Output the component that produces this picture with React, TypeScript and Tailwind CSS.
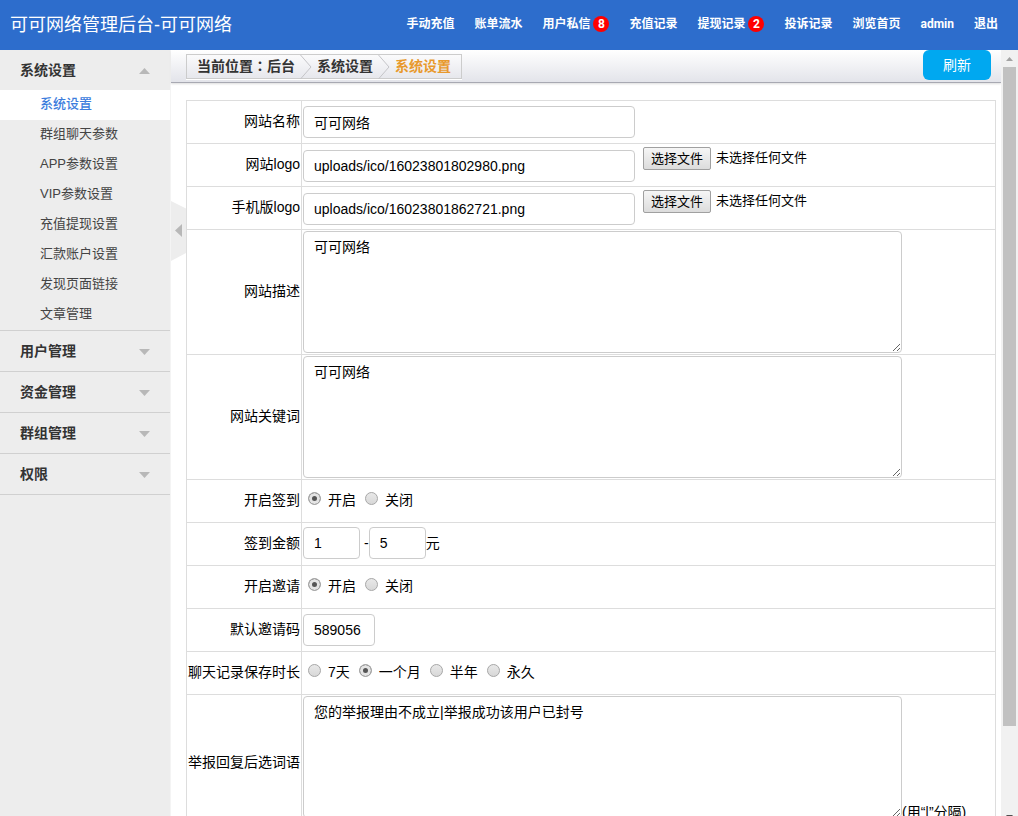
import { useState } from 'react';
import type { ReactNode } from 'react';
import clsx from 'clsx';

const navs = [
  { title: '手动充值' },
  { title: '账单流水' },
  { title: '用户私信', count: 8 },
  { title: '充值记录' },
  { title: '提现记录', count: 2 },
  { title: '投诉记录' },
  { title: '浏览首页' },
  { title: 'admin' },
  { title: '退出' },
];

const menus = [
  {
    title: '系统设置',
    items: [
      '系统设置',
      '群组聊天参数',
      'APP参数设置',
      'VIP参数设置',
      '充值提现设置',
      '汇款账户设置',
      '发现页面链接',
      '文章管理',
    ],
  },
  { title: '用户管理', items: [] },
  { title: '资金管理', items: [] },
  { title: '群组管理', items: [] },
  { title: '权限', items: [] },
];

const inputClass =
  'h-8 rounded border border-[#ccc] bg-white px-2.5 text-sm text-black outline-none focus:border-[#2d6dcc]';

function Row({
  label,
  htmlFor,
  children,
}: {
  label: string;
  htmlFor?: string;
  children: ReactNode;
}) {
  return (
    <tr>
      <th
        scope="row"
        className="h-[43px] w-[115px] border border-[#ddd] px-px pt-px pb-[3px] text-right font-normal whitespace-nowrap"
      >
        <label htmlFor={htmlFor}>{label}</label>
      </th>
      <td className="h-[43px] border border-[#ddd] p-px">{children}</td>
    </tr>
  );
}

function FileRow({ label, id, value }: { label: string; id: string; value: string }) {
  const [fileName, setFileName] = useState('未选择任何文件');

  return (
    <Row label={label} htmlFor={id}>
      <div className="flex h-10 items-start gap-2">
        <input
          id={id}
          type="text"
          defaultValue={value}
          className={clsx(inputClass, 'mt-[5px] w-[332px]')}
        />
        <div className="relative mt-px flex items-center gap-[5px] text-[13px]">
          <input
            id={`${id}-file`}
            type="file"
            className="sr-only"
            onChange={(e) => setFileName(e.target.files?.[0]?.name ?? '未选择任何文件')}
          />
          <label
            htmlFor={`${id}-file`}
            className="h-[23px] rounded-xs border border-[#a0a0a0] bg-linear-to-b from-[#f6f6f6] to-[#dcdcdc] px-[7px] leading-[22px]"
          >
            选择文件
          </label>
          <span className="leading-6">{fileName}</span>
        </div>
      </div>
    </Row>
  );
}

function RadioRow({
  label,
  name,
  options,
  checked,
}: {
  label: string;
  name: string;
  options: string[];
  checked: string;
}) {
  return (
    <Row label={label}>
      <div role="radiogroup" aria-label={label} className="flex gap-[9px] pb-0.5 pl-[5px]">
        {options.map((option) => (
          <label key={option} className="flex items-start gap-[7px]">
            <input
              type="radio"
              name={name}
              defaultChecked={option === checked}
              className="mt-0.5 size-[13px] appearance-none rounded-full border border-[#a8a8a8] bg-linear-to-b from-[#e8e8e8] to-[#d8d8d8] checked:bg-none checked:bg-[#555] checked:shadow-[inset_0_0_0_3px_#e4e4e4]"
            />
            {option}
          </label>
        ))}
      </div>
    </Row>
  );
}

function Chevron() {
  return (
    <svg width="12" height="24" viewBox="0 0 12 24" fill="none" stroke="#c4c4c8">
      <path d="M.5 0 11 12 .5 24" />
    </svg>
  );
}

function Sidebar() {
  const [open, setOpen] = useState('系统设置');
  const [active, setActive] = useState('系统设置');

  return (
    <aside className="w-[171px] shrink-0 overflow-hidden border-r border-[#f4f4f4] bg-[#ededed]">
      {menus.map((menu) => (
        <div key={menu.title} className="border-b border-[#d0d0d0]">
          <button
            type="button"
            onClick={() => setOpen(open === menu.title ? '' : menu.title)}
            className="flex h-10 w-full items-center justify-between px-5 font-bold text-[#333]"
          >
            {menu.title}
            <svg
              width="11"
              height="6"
              viewBox="0 0 11 6"
              fill="#b8b8b8"
              className={clsx('mt-0.5', open !== menu.title && 'rotate-180')}
            >
              <path d="M0 6 5.5 0 11 6z" />
            </svg>
          </button>
          {open === menu.title && menu.items.length > 0 && (
            <ul>
              {menu.items.map((item) => (
                <li key={item}>
                  <a
                    href="#"
                    onClick={() => setActive(item)}
                    className={clsx(
                      'block h-[30px] pl-10 text-[13px] leading-7',
                      active === item
                        ? 'bg-white font-medium text-[#3c7ddd]'
                        : 'text-[#444]'
                    )}
                  >
                    {item}
                  </a>
                </li>
              ))}
            </ul>
          )}
        </div>
      ))}
    </aside>
  );
}

// 右侧滚动条
function ScrollTrack() {
  return (
    <div aria-hidden="true" className="flex w-[17px] shrink-0 flex-col items-center bg-[#f1f1f1]">
      <div className="flex h-[17px] shrink-0 items-center">
        <svg width="7" height="4" viewBox="0 0 7 4" fill="#a3a3a3">
          <path d="M0 4 3.5 0 7 4z" />
        </svg>
      </div>
      <div className="h-[86%] w-[13px] bg-[#c1c1c1]" />
      <div className="flex-1" />
      <div className="-mb-4 flex h-[17px] shrink-0 items-start">
        <svg width="7" height="4" viewBox="0 0 7 4" fill="#505050">
          <path d="M0 0h7L3.500 4z" />
        </svg>
      </div>
    </div>
  );
}

export default function App() {
  return (
    <div className="flex h-screen flex-col overflow-hidden bg-white font-['Liberation_Sans','Noto_Sans_CJK_SC',sans-serif] text-sm text-black">
      <header className="flex h-[50px] shrink-0 items-center justify-between bg-[#2d6dcc] pr-5 pl-2.5 text-white">
        <h1 className="text-lg">可可网络管理后台-可可网络</h1>
        <nav className="flex items-center gap-5 pb-0.5 font-['Roboto','Noto_Sans_CJK_SC',sans-serif] text-xs font-bold">
          {navs.map((nav) => (
            <a key={nav.title} href="#" className="flex items-center gap-[3px]">
              {nav.title}
              {nav.count && (
                <span className="size-4 rounded-full bg-[#f00] text-center leading-4">
                  {nav.count}
                </span>
              )}
            </a>
          ))}
        </nav>
      </header>

      <div className="flex min-h-0 flex-1 overflow-hidden">
        <Sidebar />

        <div className="flex min-w-0 flex-1 flex-col">
          <div className="flex h-[33px] shrink-0 items-start justify-between border-b border-[#a8a9b2] bg-linear-to-b from-white to-[#e3e4ea] pr-2.5 pl-[15px] shadow-[0_1px_2px_#ddd]">
            <ol className="mt-1 flex h-[25px] items-center gap-[5px] border border-[#ccc] px-2.5 font-bold text-[#333] shadow-[0_1px_0_#fff]">
              <li className="pb-0.5">
                当前位置<span className="font-['Noto_Sans_CJK_TC',sans-serif]">：</span>后台
              </li>
              <li aria-hidden="true">
                <Chevron />
              </li>
              <li className="pb-0.5">系统设置</li>
              <li aria-hidden="true">
                <Chevron />
              </li>
              <li className="pb-0.5 text-[#e8992c]">系统设置</li>
            </ol>
            <button type="button" className="h-[30px] rounded-md bg-[#00a8f0] px-5 text-white">
              刷新
            </button>
          </div>

          <div className="flex min-h-0 flex-1">
            <div className="w-[15px] shrink-0 pt-[118px]">
              <button type="button" aria-label="收起菜单" className="block">
                <svg width="15" height="60" viewBox="0 0 15 60">
                  <path d="M0 0 15 7.500V52L0 60z" fill="#ededed" />
                  <path d="M11 23v13l-7-6.500z" fill="#b8b8b8" />
                </svg>
              </button>
            </div>
            <main className="min-w-0 flex-1 overflow-y-auto pt-[17px] pr-[5px] [scrollbar-width:none]">
              <table className="w-full border-collapse">
                <tbody>
                  <Row label="网站名称" htmlFor="name">
                    <input
                      id="name"
                      type="text"
                      defaultValue="可可网络"
                      className={clsx(inputClass, 'block w-[332px]')}
                    />
                  </Row>
                  <FileRow label="网站logo" id="logo" value="uploads/ico/16023801802980.png" />
                  <FileRow label="手机版logo" id="wap-logo" value="uploads/ico/16023801862721.png" />
                  <Row label="网站描述" htmlFor="desc">
                    <textarea
                      id="desc"
                      defaultValue="可可网络"
                      className={clsx(inputClass, 'block h-[122px] w-[599px] py-[5px]')}
                    />
                  </Row>
                  <Row label="网站关键词" htmlFor="keywords">
                    <textarea
                      id="keywords"
                      defaultValue="可可网络"
                      className={clsx(inputClass, 'block h-[122px] w-[599px] py-[5px]')}
                    />
                  </Row>
                  <RadioRow label="开启签到" name="sign" options={['开启', '关闭']} checked="开启" />
                  <Row label="签到金额" htmlFor="sign-min">
                    <div className="flex items-center pb-0.5">
                      <input
                        id="sign-min"
                        type="text"
                        defaultValue="1"
                        className={clsx(inputClass, 'mr-1 w-[57px]')}
                      />
                      -
                      <input
                        aria-label="最高签到金额"
                        type="text"
                        defaultValue="5"
                        className={clsx(inputClass, 'w-[57px]')}
                      />
                      元
                    </div>
                  </Row>
                  <RadioRow label="开启邀请" name="invite" options={['开启', '关闭']} checked="开启" />
                  <Row label="默认邀请码" htmlFor="code">
                    <input
                      id="code"
                      type="text"
                      defaultValue="589056"
                      className={clsx(inputClass, 'block w-[72px]')}
                    />
                  </Row>
                  <RadioRow
                    label="聊天记录保存时长"
                    name="keep"
                    options={['7天', '一个月', '半年', '永久']}
                    checked="一个月"
                  />
                  <Row label="举报回复后选词语" htmlFor="reply">
                    <div className="flex items-end">
                      <textarea
                        id="reply"
                        defaultValue="您的举报理由不成立|举报成功该用户已封号"
                        className={clsx(inputClass, 'mb-3 h-[122px] w-[599px] py-[5px]')}
                      />
                      <span className="mb-2">(用“|”分隔)</span>
                    </div>
                  </Row>
                </tbody>
              </table>
            </main>
          </div>
        </div>

        <ScrollTrack />
      </div>
    </div>
  );
}
